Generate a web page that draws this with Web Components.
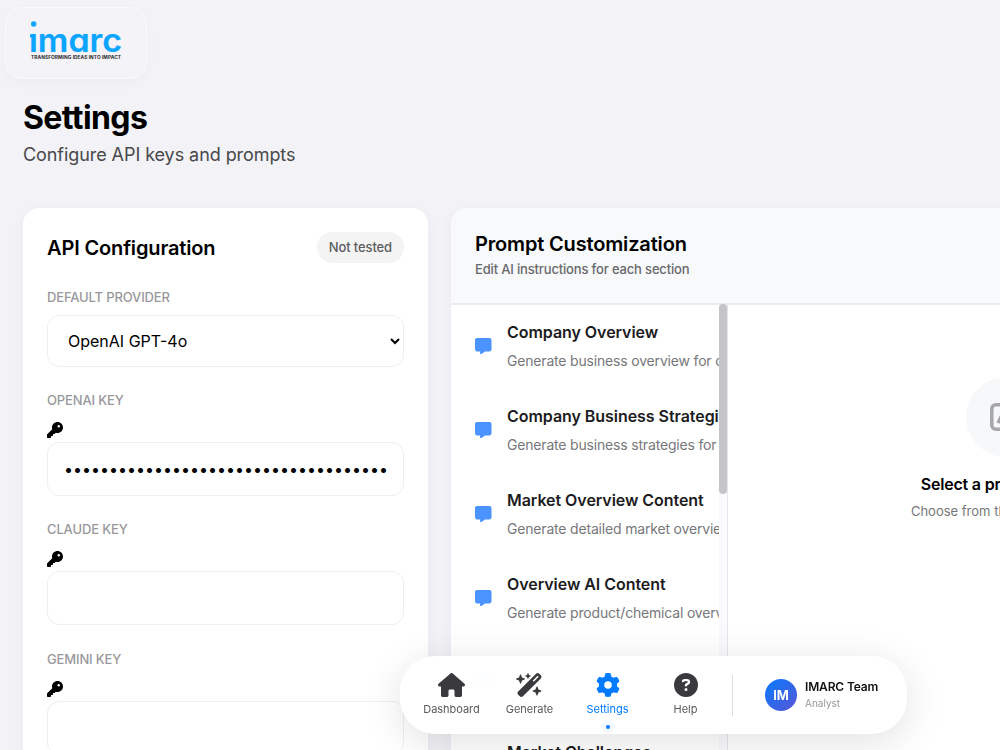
<!DOCTYPE html>
<html lang="en">
<head>
<meta charset="UTF-8">
<title>Settings</title>
<style>
    html, body {
        margin: 0;
        height: 100%;
        overflow: hidden;
        background: #f2f2f7;
        font-family: Inter, "Liberation Sans", sans-serif;
        color: #000;
    }
</style>
</head>
<body>
<settings-page>
    <brand-logo slot="logo"></brand-logo>
    <page-title slot="title" text="Settings">Configure API keys and prompts</page-title>

    <config-card slot="main" text="API Configuration" status="Not tested">
        <provider-field label="Default Provider">OpenAI GPT-4o</provider-field>
        <key-field label="OpenAI Key" value="000000000000000000000000000000000000"></key-field>
        <key-field label="Claude Key"></key-field>
        <key-field label="Gemini Key"></key-field>
    </config-card>

    <prompt-panel slot="main" text="Prompt Customization" info="Edit AI instructions for each section">
        <prompt-item slot="list" text="Company Overview">Generate business overview for company</prompt-item>
        <prompt-item slot="list" text="Company Business Strategies">Generate business strategies for company</prompt-item>
        <prompt-item slot="list" text="Market Overview Content">Generate detailed market overview</prompt-item>
        <prompt-item slot="list" text="Overview AI Content">Generate product/chemical overview</prompt-item>
        <prompt-item slot="list" text=""></prompt-item>
        <prompt-item slot="list" text="Market Challenges"></prompt-item>
        <empty-state slot="editor" text="Select a prompt to edit">Choose from the list on the left</empty-state>
    </prompt-panel>

    <nav-dock slot="dock">
        <nav-link icon="house">Dashboard</nav-link>
        <nav-link icon="wand">Generate</nav-link>
        <nav-link icon="gear" active>Settings</nav-link>
        <nav-link icon="help">Help</nav-link>
        <user-badge slot="user" initials="IM" name="IMARC Team">Analyst</user-badge>
    </nav-dock>
</settings-page>

<script>
const icons = {
    key: ["0 0 512 512", "M336 352c97.2 0 176-78.8 176-176S433.2 0 336 0S160 78.8 160 176c0 18.7 2.9 36.8 8.3 53.7L7 391c-4.5 4.5-7 10.6-7 17v80c0 13.3 10.7 24 24 24h80c13.3 0 24-10.7 24-24V448h40c13.3 0 24-10.7 24-24V384h40c6.4 0 12.5-2.5 17-7l33.3-33.3c16.9 5.4 35 8.3 53.7 8.3zM376 96a40 40 0 1 1 0 80 40 40 0 1 1 0-80z"],
    message: ["0 0 512 512", "M64 0C28.7 0 0 28.7 0 64V352c0 35.3 28.7 64 64 64h96v80c0 6.1 3.4 11.6 8.8 14.3s11.9 2.1 16.8-1.5L309.3 416H448c35.3 0 64-28.7 64-64V64c0-35.3-28.7-64-64-64H64z"],
    house: ["0 0 576 512", "M575.8 255.5c0 18-15 32.1-32 32.1h-32l.7 160.2c0 2.7-.2 5.4-.5 8.1V472c0 22.1-17.9 40-40 40H456c-1.1 0-2.2 0-3.3-.1c-1.4 .1-2.8 .1-4.2 .1H416 392c-22.1 0-40-17.9-40-40V448 384c0-17.7-14.3-32-32-32H256c-17.7 0-32 14.3-32 32v64 24c0 22.1-17.9 40-40 40H160 128.1c-1.5 0-3-.1-4.5-.2c-1.2 .1-2.4 .2-3.6 .2H104c-22.1 0-40-17.9-40-40V360c0-.9 0-1.9 .1-2.8V287.6H32c-18 0-32-14-32-32.1c0-9 3-17 10-24L266.4 8c7-7 15-8 22-8s15 2 21 7L564.8 231.5c8 7 12 15 11 24z"],
    wand: ["0 0 576 512", "M234.7 42.7L197 56.8c-3 1.1-5 4-5 7.2s2 6.1 5 7.2l37.7 14.1L248.8 123c1.1 3 4 5 7.2 5s6.1-2 7.2-5l14.1-37.7L315 71.2c3-1.1 5-4 5-7.2s-2-6.1-5-7.2L277.3 42.7 263.2 5c-1.1-3-4-5-7.2-5s-6.1 2-7.2 5L234.7 42.7zM46.1 395.4c-18.7 18.7-18.7 49.1 0 67.9l34.6 34.6c18.7 18.7 49.1 18.7 67.9 0L529.9 116.5c18.7-18.7 18.7-49.1 0-67.9L495.3 14.1c-18.7-18.7-49.1-18.7-67.9 0L46.1 395.4zM484.6 82.6l-105 105-23.3-23.3 105-105 23.3 23.3zM7.5 117.2C3 118.9 0 123.2 0 128s3 9.1 7.5 10.8L64 160l21.2 56.5c1.7 4.5 6 7.5 10.8 7.5s9.1-3 10.8-7.5L128 160l56.5-21.2c4.5-1.7 7.5-6 7.5-10.8s-3-9.1-7.5-10.8L128 96 106.8 39.5C105.1 35 100.8 32 96 32s-9.1 3-10.8 7.5L64 96 7.5 117.2zm352 256c-4.5 1.7-7.5 6-7.5 10.8s3 9.1 7.5 10.8L416 416l21.2 56.5c1.7 4.5 6 7.5 10.8 7.5s9.1-3 10.8-7.5L480 416l56.5-21.2c4.5-1.7 7.5-6 7.5-10.8s-3-9.1-7.5-10.8L480 352l-21.2-56.5c-1.7-4.5-6-7.5-10.8-7.5s-9.1 3-10.8 7.5L416 352l-56.5 21.2z"],
    gear: ["0 0 512 512", "M495.9 166.6c3.2 8.7 .5 18.4-6.4 24.6l-43.3 39.4c1.1 8.3 1.7 16.8 1.7 25.4s-.6 17.1-1.7 25.4l43.3 39.4c6.9 6.2 9.6 15.9 6.4 24.6c-4.4 11.9-9.7 23.3-15.8 34.3l-4.7 8.1c-6.6 11-14 21.4-22.1 31.2c-5.9 7.2-15.7 9.6-24.5 6.8l-55.7-17.7c-13.4 10.3-28.2 18.9-44 25.4l-12.5 57.1c-2 9.1-9 16.3-18.2 17.8c-13.8 2.3-28 3.5-42.5 3.5s-28.7-1.2-42.5-3.5c-9.2-1.5-16.2-8.7-18.2-17.8l-12.5-57.1c-15.8-6.5-30.6-15.1-44-25.4L83.1 425.9c-8.8 2.8-18.6 .3-24.5-6.8c-8.1-9.8-15.5-20.2-22.1-31.2l-4.7-8.1c-6.1-11-11.4-22.4-15.8-34.3c-3.2-8.7-.5-18.4 6.4-24.6l43.3-39.4C64.6 273.1 64 264.6 64 256s.6-17.1 1.7-25.4L22.4 191.2c-6.9-6.2-9.6-15.9-6.4-24.6c4.4-11.9 9.7-23.3 15.8-34.3l4.7-8.1c6.6-11 14-21.4 22.1-31.2c5.9-7.2 15.7-9.6 24.5-6.8l55.7 17.7c13.4-10.3 28.2-18.9 44-25.4l12.5-57.1c2-9.1 9-16.3 18.2-17.8C227.3 1.2 241.5 0 256 0s28.7 1.2 42.5 3.5c9.2 1.5 16.2 8.7 18.2 17.8l12.5 57.1c15.8 6.5 30.6 15.1 44 25.4l55.7-17.7c8.8-2.8 18.6-.3 24.5 6.8c8.1 9.8 15.5 20.2 22.1 31.2l4.7 8.1c6.1 11 11.4 22.4 15.8 34.3zM256 336a80 80 0 1 0 0-160 80 80 0 1 0 0 160z"],
    help: ["0 0 512 512", "M256 512A256 256 0 1 0 256 0a256 256 0 1 0 0 512zM169.8 165.3c7.9-22.3 29.1-37.3 52.8-37.3h58.3c34.9 0 63.1 28.3 63.1 63.1c0 22.6-12.1 43.5-31.7 54.8L280 264.4c-.2 13-10.9 23.6-24 23.6c-13.3 0-24-10.7-24-24V250.5c0-8.6 4.6-16.5 12.1-20.8l44.3-25.4c4.7-2.7 7.6-7.7 7.6-13.1c0-8.4-6.8-15.1-15.1-15.1H222.6c-3.4 0-6.4 2.1-7.5 5.3l-.4 1.2c-4.4 12.5-18.2 19-30.6 14.6s-19-18.2-14.6-30.6l.4-1.2zM224 352a32 32 0 1 1 64 0 32 32 0 1 1 -64 0z"]
};

function icon(name) {
    const [box, path] = icons[name];
    return `<svg viewBox="${box}" fill="currentColor"><path d="${path}"/></svg>`;
}

// every element renders once, from its attributes
class BaseElement extends HTMLElement{
    constructor(){
        super();
        this.attachShadow({mode: "open"});
        this.shadowRoot.innerHTML = `<style>* { box-sizing: border-box; } svg { display: block; }</style>` + this.render();
    }

    attr(name){
        return this.getAttribute(name) || "";
    }
}

class SettingsPage extends BaseElement{
    render(){
        return `
        <style>
        :host { display: block; height: 100vh; overflow: hidden; }
        header { padding: 7px 0 0 5px; }
        .title { padding: 20px 23px 0; }
        main {
            display: grid;
            grid-template-columns: 405px 832px;
            gap: 23px;
            padding: 41px 23px 0;
        }
        .dock { position: fixed; left: 400px; top: 656px; }
        </style>
        <header><slot name="logo"></slot></header>
        <div class="title"><slot name="title"></slot></div>
        <main><slot name="main"></slot></main>
        <div class="dock"><slot name="dock"></slot></div>`;
    }
}

class BrandLogo extends BaseElement{
    render(){
        return `
        <style>
        :host {
            display: block;
            box-sizing: border-box;
            width: 142px;
            height: 72px;
            padding: 12px 23px;
            border: 1px solid #f9f9fc;
            border-radius: 16px;
            background: #f3f3f8;
            box-shadow: 0 4px 14px rgba(0, 0, 0, .025);
        }
        .word {
            font-size: 32px;
            font-weight: 600;
            font-feature-settings: "cv11";
            stroke: #0ba5ff;
            stroke-width: .2px;
            clip-path: inset(13px 0 0 0);
        }
        .tag { font-size: 4.8px; font-weight: 700; }
        </style>
        <svg width="96" height="44" viewBox="0 0 96 44">
            <circle cx="4.7" cy="4" r="2.7" fill="#0ba5ff"/>
            <rect x="1" y="14.3" width="3" height="3" fill="#0ba5ff"/>
            <text class="word" x="0" y="31.5" textLength="93" lengthAdjust="spacingAndGlyphs" fill="#0ba5ff">imarc</text>
            <text class="tag" x="2" y="38.5" textLength="90" fill="#2a2a2c">TRANSFORMING IDEAS INTO IMPACT</text>
        </svg>`;
    }
}

class PageTitle extends BaseElement{
    render(){
        return `
        <style>
        :host { display: block; }
        h1 { margin: 0; font-size: 32px; font-weight: 700; line-height: 38px; letter-spacing: -.6px; }
        p { margin: 6px 0 0; font-size: 18px; line-height: 24px; letter-spacing: -.07px; color: #48484a; }
        </style>
        <h1>${this.attr("text")}</h1>
        <p><slot></slot></p>`;
    }
}

class ConfigCard extends BaseElement{
    render(){
        return `
        <style>
        :host {
            display: block;
            height: 640px;
            padding: 24px;
            box-sizing: border-box;
            border-radius: 16px;
            background: #fff;
            box-shadow: 0 4px 16px rgba(0, 0, 0, .04);
        }
        .head { display: flex; justify-content: space-between; align-items: flex-start; height: 32px; margin-bottom: 24px; }
        h2 { margin: 0; font-size: 20px; font-weight: 600; line-height: 32px; letter-spacing: -.15px; }
        .status {
            padding: 0 12px;
            border-radius: 16px;
            background: #f4f4f4;
            font-size: 13px;
            font-weight: 500;
            line-height: 31px;
            letter-spacing: -.13px;
            color: #5d5d60;
        }
        </style>
        <div class="head">
            <h2>${this.attr("text")}</h2>
            <span class="status">${this.attr("status")}</span>
        </div>
        <slot></slot>`;
    }
}

const fieldStyle = `
    :host { display: block; }
    label {
        display: block;
        font-size: 13px;
        font-weight: 500;
        line-height: 18px;
        letter-spacing: -.14px;
        text-transform: uppercase;
        color: #98989c;
    }
    select, input {
        display: block;
        width: 100%;
        border: 1px solid #efeff1;
        border-radius: 12px;
        background: #fff;
        color: #000;
        font: 400 16px Inter, sans-serif;
        outline: none;
    }
`;

class ProviderField extends BaseElement{
    render(){
        return `
        <style>
        ${fieldStyle}
        :host { margin-bottom: 24px; }
        select { height: 52px; margin-top: 9px; padding: 0 0 0 16px; }
        </style>
        <label>${this.attr("label")}</label>
        <select><option>${this.textContent}</option></select>`;
    }
}

class KeyField extends BaseElement{
    render(){
        return `
        <style>
        ${fieldStyle}
        :host { margin-bottom: 24.3px; }
        svg { width: 16px; height: 16px; margin: 13px 0 4px; }
        input { height: 54px; padding: 0 16px; }
        </style>
        <label>${this.attr("label")}</label>
        ${icon("key")}
        <input type="password" value="${this.attr("value")}">`;
    }
}

class PromptPanel extends BaseElement{
    render(){
        return `
        <style>
        :host {
            display: block;
            height: 640px;
            overflow: hidden;
            border-radius: 16px;
            background: #fff;
            box-shadow: 0 4px 16px rgba(0, 0, 0, .04);
        }
        header { height: 97px; padding: 24px; border-bottom: 2px solid #ebecef; background: #f8f9fb; }
        h2 { margin: 0; font-size: 20px; font-weight: 600; line-height: 24px; letter-spacing: -.16px; }
        p { margin: 4px 0 0; font-size: 13px; line-height: 18px; letter-spacing: -.16px; color: #68686c; font-weight: 500; }
        .body { display: grid; grid-template-columns: 268px 8px 1fr; height: 543px; }
        .list { overflow: hidden; margin-top: -1px; }
        .bar { background: #fafafc; }
        .thumb { height: 190px; margin-top: -1px; border-radius: 4px; background: #c5c5c7; }
        .editor { border-left: 1px solid #e5e5ea; }
        </style>
        <header>
            <h2>${this.attr("text")}</h2>
            <p>${this.attr("info")}</p>
        </header>
        <div class="body">
            <div class="list"><slot name="list"></slot></div>
            <div class="bar"><div class="thumb"></div></div>
            <div class="editor"><slot name="editor"></slot></div>
        </div>`;
    }
}

class PromptItem extends BaseElement{
    render(){
        return `
        <style>
        :host { display: flex; align-items: center; gap: 15.5px; height: 84px; padding-left: 24px; white-space: nowrap; }
        svg { flex: none; width: 16.5px; height: 16.5px; color: #4b93ff; }
        .text { height: 52px; }
        b { display: block; height: 24px; font-size: 16px; font-weight: 600; line-height: 24px; letter-spacing: -.05px; color: #1c1c1e; }
        p { margin: 7px 0 0; font-size: 14px; line-height: 20px; letter-spacing: -.18px; color: #77777b; }
        </style>
        ${icon("message")}
        <div class="text">
            <b>${this.attr("text")}</b>
            <p><slot></slot></p>
        </div>`;
    }
}

class EmptyState extends BaseElement{
    render(){
        return `
        <style>
        :host { display: flex; flex-direction: column; align-items: center; padding-top: 72px; white-space: nowrap; }
        .round { display: grid; place-items: center; width: 80px; height: 80px; border-radius: 50%; background: #f7f8fa; }
        h3 { margin: 16px 0 0; font-size: 16px; font-weight: 600; line-height: 22px; letter-spacing: -.2px; }
        p { margin: 6px 0 0; font-size: 13px; line-height: 20px; color: #77777b; }
        </style>
        <div class="round">
            <svg width="32" height="28" viewBox="0 0 32 28" fill="none" stroke="#a7a7aa" stroke-width="3.5">
                <rect x="1.8" y="1.8" width="28.4" height="24.4" rx="4"/>
                <path d="M8 20l5-10 6 10"/>
            </svg>
        </div>
        <h3>${this.attr("text")}</h3>
        <p><slot></slot></p>`;
    }
}

class NavDock extends BaseElement{
    render(){
        return `
        <style>
        :host {
            display: flex;
            align-items: center;
            box-sizing: border-box;
            width: 507px;
            height: 78px;
            padding-left: 12.5px;
            border-radius: 36px;
            background: rgba(255, 255, 255, .94);
            backdrop-filter: blur(20px);
            box-shadow: 0 8px 40px rgba(0, 0, 0, .12);
        }
        .line { width: 1px; height: 41px; margin: 0 32px 0 7.5px; background: #dcdde0; }
        </style>
        <slot></slot>
        <div class="line"></div>
        <slot name="user"></slot>`;
    }
}

class NavLink extends BaseElement{
    render(){
        return `
        <style>
        :host { display: flex; flex-direction: column; align-items: center; width: 78px; height: 78px; padding-top: 17px; box-sizing: border-box; color: #3a3a3e; }
        svg { height: 24px; }
        span { margin-top: 5px; font-size: 11px; line-height: 14px; font-weight: 400; letter-spacing: -.03px; color: #58585c; }
        i { width: 4px; height: 4px; margin-top: 9px; border-radius: 50%; }
        :host([active]), :host([active]) span { color: #007aff; }
        :host([active]) i { background: #007aff; box-shadow: 0 0 6px rgba(0, 122, 255, .5); }
        </style>
        ${icon(this.attr("icon"))}
        <span><slot></slot></span>
        <i></i>`;
    }
}

class UserBadge extends BaseElement{
    render(){
        return `
        <style>
        :host { display: flex; align-items: center; gap: 8px; white-space: nowrap; }
        .avatar {
            display: grid;
            place-items: center;
            width: 32px;
            height: 32px;
            border-radius: 50%;
            background: linear-gradient(135deg, #087bff, #5856d6);
            color: #fff;
            font-size: 13px;
            font-weight: 700;
            letter-spacing: -.2px;
        }
        b { display: block; font-size: 12px; font-weight: 600; line-height: 17px; letter-spacing: -.15px; color: #111; }
        small { display: block; font-size: 10px; line-height: 16px; margin-bottom: 2px; color: #98989c; }
        </style>
        <div class="avatar">${this.attr("initials")}</div>
        <div>
            <b>${this.attr("name")}</b>
            <small><slot></slot></small>
        </div>`;
    }
}

window.customElements.define("settings-page", SettingsPage)
window.customElements.define("brand-logo", BrandLogo)
window.customElements.define("page-title", PageTitle)
window.customElements.define("config-card", ConfigCard)
window.customElements.define("provider-field", ProviderField)
window.customElements.define("key-field", KeyField)
window.customElements.define("prompt-panel", PromptPanel)
window.customElements.define("prompt-item", PromptItem)
window.customElements.define("empty-state", EmptyState)
window.customElements.define("nav-dock", NavDock)
window.customElements.define("nav-link", NavLink)
window.customElements.define("user-badge", UserBadge)
</script>
</body>
</html>
